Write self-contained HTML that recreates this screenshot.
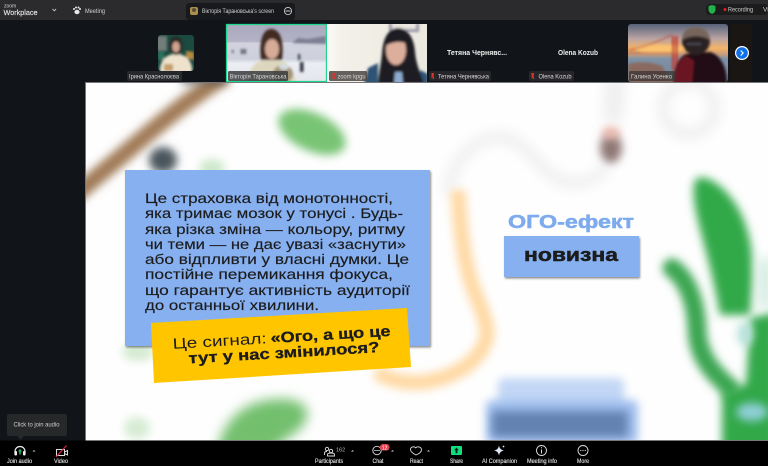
<!DOCTYPE html>
<html><head><meta charset="utf-8">
<style>
html,body{margin:0;padding:0;background:#111418;width:768px;height:466px;overflow:hidden}
svg{display:block;position:absolute;left:0;top:0}
text{font-family:"Liberation Sans",sans-serif}
.t{fill:#1b1b1d;font-size:14px;stroke:#1b1b1d;stroke-width:.15}
.b{font-weight:bold;stroke-width:.3}
.ui{fill:#d0d0d0;font-size:6.5px}
.tb{fill:#e4e4e4;font-size:6.5px;text-anchor:middle;stroke:#e4e4e4;stroke-width:.12}
.nm{fill:#d6d6d6;font-size:6.5px}
</style></head><body>
<svg width="768" height="466" viewBox="0 0 768 466" xmlns="http://www.w3.org/2000/svg">
<defs>
<filter id="b1" filterUnits="userSpaceOnUse" x="0" y="0" width="768" height="466"><feGaussianBlur stdDeviation="1.300"/></filter>
<filter id="b3" filterUnits="userSpaceOnUse" x="0" y="0" width="768" height="466"><feGaussianBlur stdDeviation="4.500"/></filter>
<filter id="b4" filterUnits="userSpaceOnUse" x="0" y="0" width="768" height="466"><feGaussianBlur stdDeviation="6"/></filter>
<filter id="b5" filterUnits="userSpaceOnUse" x="0" y="0" width="768" height="466"><feGaussianBlur stdDeviation="8"/></filter>
<filter id="s" filterUnits="userSpaceOnUse" x="0" y="0" width="768" height="466"><feGaussianBlur stdDeviation="0.350"/></filter>
<filter id="sh" filterUnits="userSpaceOnUse" x="0" y="0" width="768" height="466"><feDropShadow dx="1" dy="1.500" stdDeviation="1" flood-color="#000" flood-opacity=".45"/></filter>
<linearGradient id="sky" x1="0" y1="0" x2="0" y2="1"><stop offset="0" stop-color="#56627a"/><stop offset=".25" stop-color="#b9a4a4"/><stop offset=".42" stop-color="#f4b468"/><stop offset=".52" stop-color="#c99c7c"/><stop offset=".6" stop-color="#7f93a8"/><stop offset="1" stop-color="#70849a"/></linearGradient>
<linearGradient id="snow" x1="0" y1="0" x2="0" y2="1"><stop offset="0" stop-color="#a9a8bc"/><stop offset=".3" stop-color="#b4b3c6"/><stop offset=".33" stop-color="#d2d3df"/><stop offset=".6" stop-color="#cdd0dc"/><stop offset=".68" stop-color="#eceef4"/><stop offset="1" stop-color="#e4e6ee"/></linearGradient>
<linearGradient id="wall" x1="0" y1="0" x2="1" y2="0"><stop offset="0" stop-color="#fbfaf6"/><stop offset=".15" stop-color="#f2f0e8"/><stop offset="1" stop-color="#ece9df"/></linearGradient>
<clipPath id="sl"><rect x="86" y="83" width="682" height="357"/></clipPath>
<clipPath id="c1"><rect x="158" y="35" width="36" height="36" rx="3"/></clipPath>
<clipPath id="c2"><rect x="227" y="25" width="99" height="56"/></clipPath>
<clipPath id="c3"><rect x="327" y="24" width="100" height="58"/></clipPath>
<clipPath id="c4"><rect x="628" y="24" width="100" height="58" rx="3"/></clipPath>
</defs>

<!-- base -->
<rect width="768" height="466" fill="#111418"/>
<rect width="768" height="20" fill="#2b2b2d"/>
<rect x="186" y="3" width="109" height="17" rx="3" fill="#17191d"/>
<rect x="730" y="24" width="22" height="58" fill="#1a1614"/>

<!-- top bar -->
<g filter="url(#s)">
<text x="4" y="7.500" fill="#d8d8d8" font-size="5">zoom</text>
<text x="3.500" y="15" fill="#e4e4e4" font-size="7.500" stroke="#e4e4e4" stroke-width=".15" textLength="34" lengthAdjust="spacingAndGlyphs">Workplace</text>
<path d="M52.500 9l1.800 1.800 1.800-1.800" stroke="#bbb" fill="none"/>
<g fill="#e8e8e8"><ellipse cx="77" cy="12" rx="2.600" ry="2.200"/><circle cx="74" cy="9" r="1"/><circle cx="76" cy="7.500" r="1"/><circle cx="78.500" cy="7.500" r="1"/><circle cx="80" cy="9" r="1"/></g>
<text x="85" y="13" class="ui" textLength="20" lengthAdjust="spacingAndGlyphs">Meeting</text>
<rect x="190" y="7" width="8" height="8" rx="2" fill="#a8904c"/><circle cx="194" cy="10" r="2" fill="#5a4a38"/>
<text x="202" y="13" fill="#d0d0d0" font-size="6.500" textLength="72" lengthAdjust="spacingAndGlyphs">Вікторія Тарановська's screen</text>
<circle cx="288" cy="11" r="3.600" fill="none" stroke="#ccc" stroke-width=".9"/><path d="M285.500 11h5" stroke="#ccc"/>
<rect x="706" y="4" width="62" height="11" rx="4" fill="#1a1c1f"/>
<path d="M708.500 6l3.500-1 3.500 1v3.500c0 2.500-1.600 3.600-3.500 4.500-1.900-.9-3.500-2-3.500-4.500z" fill="#22b04c"/>
<circle cx="725" cy="9.500" r="1.500" fill="#e02020"/>
<text x="728" y="11.500" class="ui" textLength="25" lengthAdjust="spacingAndGlyphs">Recording</text>
<text x="763" y="11.500" class="ui">Vi</text>
</g>

<!-- tile 1 -->
<g clip-path="url(#c1)">
<rect x="158" y="35" width="36" height="36" fill="#1a4a40"/>
<g filter="url(#b1)">
<rect x="156" y="36" width="11" height="15" fill="#727c78"/>
<path d="M186 51l8 1v8l-8-2z" fill="#b98a3c"/>
<path d="M158 52h6v8h-6z" fill="#26755e"/>
<path d="M160 73c-1-11 5-19 16-19s17 8 16 19z" fill="#efe2cc"/>
<ellipse cx="176" cy="46" rx="6.500" ry="9" fill="#2a2220"/>
<ellipse cx="176" cy="47" rx="3.800" ry="5.500" fill="#cfa48e"/>
<rect x="164" y="64" width="9" height="7" fill="#c49e6c"/>
</g></g>
<rect x="127" y="71" width="55" height="10" rx="1.500" fill="#26282b"/>
<text x="129" y="78.500" class="nm" textLength="50" lengthAdjust="spacingAndGlyphs">Ірина Краснолоєва</text>

<!-- tile 2 -->
<g clip-path="url(#c2)">
<rect x="226" y="24" width="102" height="58" fill="url(#snow)"/>
<g filter="url(#b1)">
<path d="M292 43l6-5 10 1 18-3v8z" fill="#7c7e92"/>
<rect x="232" y="50" width="1.500" height="3" fill="#444"/><rect x="241" y="49" width="1.800" height="5" fill="#3b3b4a"/><rect x="244" y="49" width="1.800" height="5" fill="#3b3b4a"/>
<rect x="298" y="54" width="2.200" height="6" fill="#333844"/><rect x="300" y="62" width="3.500" height="10" fill="#2e3340"/>
<path d="M248 84c0-14 6-24 18-24h10c12 0 18 10 20 24z" fill="#ded7bf"/>
<path d="M261 60c-2-14 0-31 10-31 11 0 13 16 11 31z" fill="#3f2a24"/>
<ellipse cx="272" cy="49" rx="7" ry="10" fill="#d6ab97"/>
<ellipse cx="283" cy="74" rx="10" ry="9" fill="#a39478"/>
<ellipse cx="284" cy="67" rx="5" ry="3" fill="#d4dce0"/>
</g></g>
<rect x="226.500" y="24.500" width="100" height="57" fill="none" stroke="#20d58c" stroke-width="1.300"/>
<rect x="228" y="71" width="60" height="10" rx="1.500" fill="#3a3c40" opacity=".85"/>
<text x="229.500" y="78.500" class="nm" textLength="57" lengthAdjust="spacingAndGlyphs">Вікторія Тарановська</text>

<!-- tile 3 -->
<g clip-path="url(#c3)">
<rect x="327" y="24" width="100" height="58" fill="url(#wall)"/>
<g filter="url(#b1)">
<rect x="389" y="23" width="30" height="9" fill="#9a96a8"/>
<rect x="392" y="22" width="24" height="7" fill="#ebe6e0"/>
<path d="M364 84l4-16 10-5v21z" fill="#2f5275"/>
<path d="M420 70l8 4v10h-8z" fill="#2f5275"/>
<path d="M378 84c1-12 3-20 4-30 1-17 7-26 16-26s16 9 17 24c1 12 5 20 9 32z" fill="#1f1b21"/>
<ellipse cx="396" cy="50" rx="10" ry="15" fill="#dcae9c"/>
<path d="M385 46c2-8 8-12 12-12s9 4 11 10c-6-3-15-3-23 2z" fill="#1f1b21"/>
<path d="M394 84l1-12h7l1 12z" fill="#8eacd0"/>
</g></g>
<rect x="329" y="71" width="38" height="10" rx="1.500" fill="#4a4644" opacity=".85"/>
<path d="M332.500 73h2.500l-.4 3 .6 3h-1.500l-.2-2.500-1 2.500" fill="#e0312b"/>
<text x="337.500" y="78.500" class="nm" textLength="28" lengthAdjust="spacingAndGlyphs">zoom kpgu</text>

<!-- tile 4, 5 -->
<g filter="url(#s)">
<text x="447" y="55" fill="#eee" font-size="7.500" font-weight="bold" textLength="60" lengthAdjust="spacingAndGlyphs">Тетяна Чернявс...</text>
<text x="558" y="55" fill="#eee" font-size="7.500" font-weight="bold" textLength="40" lengthAdjust="spacingAndGlyphs">Olena Kozub</text>
<rect x="429" y="71" width="62" height="10" rx="1.500" fill="#26282b"/>
<path d="M431.500 73h2.500l-.4 3 .6 3h-1.500l-.2-2.500-1 2.500" fill="#e0312b"/>
<text x="438" y="78.500" class="nm" textLength="51" lengthAdjust="spacingAndGlyphs">Тетяна Чернявська</text>
<rect x="529" y="71" width="45" height="10" rx="1.500" fill="#26282b"/>
<path d="M531.500 73h2.500l-.4 3 .6 3h-1.500l-.2-2.500-1 2.500" fill="#e0312b"/>
<text x="538.500" y="78.500" class="nm" textLength="33" lengthAdjust="spacingAndGlyphs">Olena Kozub</text>
</g>

<!-- tile 6 -->
<g clip-path="url(#c4)">
<rect x="628" y="24" width="100" height="58" fill="url(#sky)"/>
<g filter="url(#b1)">
<ellipse cx="660" cy="49" rx="24" ry="4" fill="#fbc270"/>
<path d="M628 64c12-3 24-2 34 2l12 18h-46z" fill="#8a6a60"/>
<path d="M628 50c16-2 30-9 44-15" stroke="#b8473a" fill="none" stroke-width="1"/>
<rect x="672" y="36" width="2.300" height="34" fill="#c23a2e"/><rect x="675.500" y="36" width="2.300" height="34" fill="#c23a2e"/>
<path d="M628 53h50" stroke="#b8694a" stroke-width="1.300"/>
<path d="M673 84c0-15 5-26 13-30l24-2c10 3 17 14 17 32z" fill="#200f15"/>
<path d="M673 84c1-13 4-22 13-28l8 5-2 23z" fill="#6b1420"/>
<ellipse cx="696" cy="41" rx="14" ry="14" fill="#2c2220"/>
<path d="M682 40c0-9 6-13 14-13s14 5 14 13c-8-5-20-5-28 0z" fill="#77655c"/>
<path d="M687 44h14" stroke="#5c6070" stroke-width="1"/>
</g></g>
<rect x="629" y="71" width="46" height="10" rx="1.500" fill="#3a3432" opacity=".75"/>
<text x="631" y="78.500" class="nm" fill="#e4e4e4" textLength="41" lengthAdjust="spacingAndGlyphs">Галина Усенко</text>

<circle cx="742" cy="53" r="7" fill="#fff"/><circle cx="742" cy="53" r="5.800" fill="#0e71eb"/>
<path d="M740.700 50.500l2.500 2.500-2.500 2.500" stroke="#fff" stroke-width="1.100" fill="none"/>

<!-- slide -->
<rect x="85" y="82" width="683" height="359" fill="#76767a"/>
<g clip-path="url(#sl)">
<rect x="86" y="83" width="682" height="357" fill="#fefefe"/>

<!-- brown diagonal -->
<path d="M74 196L150 132Q185 102 224 76" stroke="#a07a56" stroke-width="17" fill="none" filter="url(#b3)"/>
<path d="M228 80h-46" stroke="#5c5a56" stroke-width="7" filter="url(#b3)"/>
<ellipse cx="163" cy="160" rx="14" ry="13" fill="#4a545b" filter="url(#b3)"/>
<ellipse cx="312" cy="132" rx="36" ry="19" transform="rotate(25 312 132)" fill="#78c474" filter="url(#b3)"/>
<ellipse cx="212" cy="168" rx="13" ry="9" fill="#cde8ca" filter="url(#b3)"/>
<ellipse cx="138" cy="352" rx="16" ry="9" fill="#d4ebd1" filter="url(#b3)"/>

<!-- bottom greens -->
<path d="M218 452c2-24 20-48 50-52 28-4 44 4 38 20-6 14-24 18-34 32z" fill="#72bf6d" filter="url(#b4)"/>
<ellipse cx="137" cy="428" rx="13" ry="11" fill="#d6ecd3" filter="url(#b3)"/>

<!-- pale lines top right -->
<g filter="url(#b4)" fill="none" stroke="#efeff0" stroke-width="11">
<path d="M448 195c2-30 24-58 52-58 28 0 44 46 72 46 14 0 28-6 36-16"/>
<path d="M615 78l-2 44" stroke-width="20"/>
<circle cx="689" cy="108" r="26"/>
</g>
<ellipse cx="611" cy="148" rx="11" ry="15" fill="#8e7876" filter="url(#b3)"/>
<ellipse cx="611" cy="133" rx="9" ry="6" fill="#eeb8ac" filter="url(#b3)"/>

<!-- orange curve -->
<path d="M458 190C460 230 464 262 472 285C482 312 492 330 484 345C474 366 450 378 425 382C405 384 390 380 376 372" stroke="#ffd9a4" stroke-width="15" fill="none" filter="url(#b3)"/>

<!-- right greens -->
<path d="M695 180C688 205 708 245 720 315L750 315C756 265 752 238 742 216C732 192 706 170 695 180z" fill="#33a94a" filter="url(#b3)"/>
<path d="M672 268C686 278 696 300 697 330C698 356 712 372 730 388" stroke="#3ba551" stroke-width="19" fill="none" stroke-linecap="round" filter="url(#b3)"/>
<path d="M750 318L776 312V452H722V392L746 384z" fill="#31a849" filter="url(#b3)"/>
<rect x="758" y="258" width="14" height="50" fill="#d4ebe2" filter="url(#b4)"/>
<ellipse cx="752" cy="412" rx="16" ry="9" fill="#90cfd8" filter="url(#b3)"/>
<ellipse cx="745" cy="334" rx="8" ry="12" fill="#b8e2dc" filter="url(#b3)"/>

<!-- blue blur -->
<rect x="498" y="378" width="126" height="32" rx="6" fill="#c2d7f5" filter="url(#b3)"/>
<rect x="486" y="400" width="152" height="44" rx="6" fill="#a0bfee" filter="url(#b3)"/>
<rect x="492" y="411" width="136" height="26" rx="4" fill="#6482b2" filter="url(#b3)"/>
</g>

<!-- main blue card -->
<rect x="125" y="170" width="305" height="176" fill="#86b0ef" filter="url(#sh)"/>
<g filter="url(#s)">
<text class="t" x="145" y="203" textLength="248" lengthAdjust="spacingAndGlyphs">Це страховка від монотонності,</text>
<text class="t" x="145" y="218" textLength="258" lengthAdjust="spacingAndGlyphs">яка тримає мозок у тонусі . Будь-</text>
<text class="t" x="145" y="234" textLength="260" lengthAdjust="spacingAndGlyphs">яка різка зміна — кольору, ритму</text>
<text class="t" x="145" y="249" textLength="261" lengthAdjust="spacingAndGlyphs">чи теми — не дає увазі «заснути»</text>
<text class="t" x="145" y="264" textLength="264" lengthAdjust="spacingAndGlyphs">або відпливти у власні думки. Це</text>
<text class="t" x="145" y="279" textLength="248" lengthAdjust="spacingAndGlyphs">постійне перемикання фокуса,</text>
<text class="t" x="145" y="295" textLength="265" lengthAdjust="spacingAndGlyphs">що гарантує активність аудиторії</text>
<text class="t" x="145" y="310" textLength="174" lengthAdjust="spacingAndGlyphs">до останньої хвилини.</text>
</g>

<!-- yellow card -->
<polygon points="151,323 407,308 411,367 154,383" fill="#ffc600"/>
<g filter="url(#s)"><g transform="rotate(-3.400 280 345)">
<text class="t" x="173" y="342.500" style="font-size:15px;stroke-width:0" textLength="94" lengthAdjust="spacingAndGlyphs">Це сигнал:</text>
<text class="t b" x="271" y="342.500" style="font-size:15px" textLength="120" lengthAdjust="spacingAndGlyphs">«Ого, а що це</text>
<text class="t b" x="188" y="358" style="font-size:15px" textLength="191" lengthAdjust="spacingAndGlyphs">тут у нас змінилося?</text>
</g></g>

<!-- OGO -->
<g filter="url(#s)">
<text x="508" y="228" fill="#7dabee" font-size="18" font-weight="bold" stroke="#7dabee" stroke-width=".5" textLength="126" lengthAdjust="spacingAndGlyphs">ОГО-ефект</text>
</g>
<rect x="504" y="236" width="135" height="41" fill="#86b0ef" filter="url(#sh)"/>
<text x="524" y="261" fill="#1b1b1d" font-size="18" font-weight="bold" stroke="#1b1b1d" stroke-width=".5" textLength="94" lengthAdjust="spacingAndGlyphs" filter="url(#s)">новизна</text>

<!-- tooltip -->
<rect x="7" y="414" width="60" height="22" rx="2" fill="#26282a"/>
<path d="M17 436l3.500 4 3.500-4z" fill="#26282a"/>
<text x="13.500" y="426.500" class="ui" fill="#cfcfcf" font-size="6.800" textLength="46" lengthAdjust="spacingAndGlyphs">Click to join audio</text>

<!-- bottom bar -->
<rect y="440.500" width="768" height="25.500" fill="#000"/>
<rect x="86" y="440" width="682" height="1" fill="#77777a"/>
<g filter="url(#s)">
<!-- join audio -->
<path d="M15 455v-3.500a5 5 0 0 1 10 0V455" stroke="#eee" stroke-width="1.200" fill="none"/>
<rect x="14.500" y="451" width="2.500" height="4.500" rx="1" fill="#eee"/><rect x="23" y="451" width="2.500" height="4.500" rx="1" fill="#eee"/>
<path d="M20 449l2 2.500h-1.300v3h-1.400v-3H18z" fill="#22c26c"/>
<path d="M32.500 451.500l1.500-1.500 1.500 1.500" fill="#ccc"/>
<text x="19.500" y="463" class="tb" textLength="25" lengthAdjust="spacingAndGlyphs">Join audio</text>
<!-- video -->
<path d="M56.500 449.500h8v6h-8z M64.500 452l3-1.500v4.500l-3-1.500" fill="none" stroke="#ddd" stroke-width="1"/>
<path d="M56 457l10.500-11.500" stroke="#e0244a" stroke-width="1.200"/>
<text x="61" y="463" class="tb" textLength="14" lengthAdjust="spacingAndGlyphs">Video</text>
<!-- participants -->
<circle cx="327" cy="449" r="1.700" fill="none" stroke="#ddd" stroke-width=".9"/><circle cx="331" cy="451" r="1.700" fill="none" stroke="#ddd" stroke-width=".9"/>
<path d="M324.500 455v-2c0-1 1-1.500 2.500-1.500 M327.500 456v-1.500c0-1.300 1.500-1.500 3.500-1.500s3.500.2 3.500 1.500V456z" fill="none" stroke="#ddd" stroke-width=".9"/>
<text x="336" y="451.500" fill="#bbb" font-size="5.500">162</text>
<path d="M351 451.500l1.500-1.500 1.500 1.500" fill="#ccc"/>
<text x="329" y="463" class="tb" textLength="28" lengthAdjust="spacingAndGlyphs">Participants</text>
<!-- chat -->
<circle cx="377" cy="450.500" r="4.200" fill="none" stroke="#ddd" stroke-width=".9"/><path d="M374 450.500h6" stroke="#ddd" stroke-width=".7"/>
<rect x="380" y="444" width="9.500" height="6.500" rx="3.200" fill="#e84350"/>
<text x="384.700" y="449.500" fill="#fff" font-size="5" text-anchor="middle">12</text>
<path d="M391 451.500l1.500-1.500 1.500 1.500" fill="#ccc"/>
<text x="378" y="463" class="tb" textLength="11" lengthAdjust="spacingAndGlyphs">Chat</text>
<!-- react -->
<path d="M416 455c-3-1.600-5.500-3.300-5.500-5.400 0-2.800 3.600-3.600 5.200-1.800 1.800-1.900 5.800-.8 5.800 2 0 2.300-2.500 4-5.500 5.200z" fill="none" stroke="#ddd" stroke-width=".9"/>
<path d="M427 451.500l1.500-1.500 1.500 1.500" fill="#ccc"/>
<text x="416.500" y="463" class="tb" textLength="13" lengthAdjust="spacingAndGlyphs">React</text>
<!-- share -->
<rect x="451" y="446" width="11" height="9" rx="1" fill="#0fe07b"/>
<path d="M456.500 447.500l2.300 2.700h-1.400v3h-1.800v-3h-1.400z" fill="#06241a"/>
<text x="456.500" y="463" class="tb" textLength="13" lengthAdjust="spacingAndGlyphs">Share</text>
<!-- ai -->
<path d="M499 445.500c.6 3 2 4.400 5 5-3 .6-4.400 2-5 5-.6-3-2-4.400-5-5 3-.6 4.400-2 5-5z" fill="#dce7f5"/>
<circle cx="503.500" cy="446.500" r=".9" fill="#dce7f5"/>
<text x="499.500" y="463" class="tb" textLength="35" lengthAdjust="spacingAndGlyphs">AI Companion</text>
<!-- info -->
<circle cx="541.500" cy="450.500" r="5" fill="none" stroke="#ddd" stroke-width=".9"/>
<path d="M541.500 449.500v4M541.500 447.300v1" stroke="#ddd" stroke-width="1"/>
<text x="542" y="463" class="tb" textLength="30" lengthAdjust="spacingAndGlyphs">Meeting info</text>
<!-- more -->
<circle cx="583" cy="450.500" r="5" fill="none" stroke="#ddd" stroke-width=".9"/>
<g fill="#ddd"><circle cx="580.800" cy="450.500" r=".6"/><circle cx="583" cy="450.500" r=".6"/><circle cx="585.200" cy="450.500" r=".6"/></g>
<text x="583" y="463" class="tb" textLength="12" lengthAdjust="spacingAndGlyphs">More</text>
</g>
</svg>
</body></html>
